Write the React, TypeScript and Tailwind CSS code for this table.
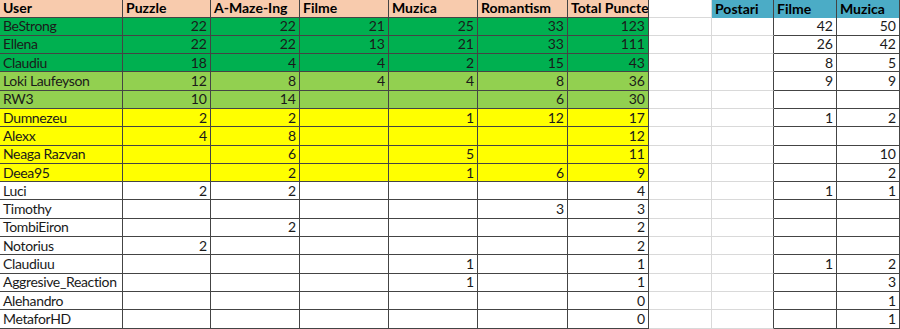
type Row = {
  user: string;
  vals: (number | null)[];
  total: number;
  filme: number | null;
  muzica: number | null;
  tone: "dark" | "light" | "yellow" | "none";
};

const ROWS: Row[] = [
  { user: "BeStrong", vals: [22, 22, 21, 25, 33], total: 123, filme: 42, muzica: 50, tone: "dark" },
  { user: "Ellena", vals: [22, 22, 13, 21, 33], total: 111, filme: 26, muzica: 42, tone: "dark" },
  { user: "Claudiu", vals: [18, 4, 4, 2, 15], total: 43, filme: 8, muzica: 5, tone: "dark" },
  { user: "Loki Laufeyson", vals: [12, 8, 4, 4, 8], total: 36, filme: 9, muzica: 9, tone: "light" },
  { user: "RW3", vals: [10, 14, null, null, 6], total: 30, filme: null, muzica: null, tone: "light" },
  { user: "Dumnezeu", vals: [2, 2, null, 1, 12], total: 17, filme: 1, muzica: 2, tone: "yellow" },
  { user: "Alexx", vals: [4, 8, null, null, null], total: 12, filme: null, muzica: null, tone: "yellow" },
  { user: "Neaga Razvan", vals: [null, 6, null, 5, null], total: 11, filme: null, muzica: 10, tone: "yellow" },
  { user: "Deea95", vals: [null, 2, null, 1, 6], total: 9, filme: null, muzica: 2, tone: "yellow" },
  { user: "Luci", vals: [2, 2, null, null, null], total: 4, filme: 1, muzica: 1, tone: "none" },
  { user: "Timothy", vals: [null, null, null, null, 3], total: 3, filme: null, muzica: null, tone: "none" },
  { user: "TombiEiron", vals: [null, 2, null, null, null], total: 2, filme: null, muzica: null, tone: "none" },
  { user: "Notorius", vals: [2, null, null, null, null], total: 2, filme: null, muzica: null, tone: "none" },
  { user: "Claudiuu", vals: [null, null, null, 1, null], total: 1, filme: 1, muzica: 2, tone: "none" },
  { user: "Aggresive_Reaction", vals: [null, null, null, 1, null], total: 1, filme: null, muzica: 3, tone: "none" },
  { user: "Alehandro", vals: [null, null, null, null, null], total: 0, filme: null, muzica: 1, tone: "none" },
  { user: "MetaforHD", vals: [null, null, null, null, null], total: 0, filme: null, muzica: 1, tone: "none" },
];

const TONE = {
  dark: "bg-[#00b050]",
  light: "bg-[#92d050]",
  yellow: "bg-[#ffff00]",
  none: "bg-white",
};

const GRID =
  "grid grid-cols-[123px_88px_89px_89px_89px_90px_81px_63px_62px_63px_63px]";

const dark = "border-r border-b border-[#444]";
const light = "border-r border-b border-[#d9d9d9]";

export default function App() {
  return (
    <div
      className="w-[900px] h-[329px] overflow-hidden bg-white text-[14px] leading-none text-[#1a1a1a]"
      style={{ fontFamily: "Lato, 'Liberation Sans', sans-serif" }}
    >
      <div className={`${GRID} h-[17.5px] font-bold text-black`}>
        {["User", "Puzzle", "A-Maze-Ing", "Filme", "Muzica", "Romantism", "Total Puncte"].map((h) => (
          <div key={h} className={`${dark} bg-[#f8cbad] flex items-center pl-[3px] whitespace-nowrap overflow-hidden`}>
            {h}
          </div>
        ))}
        <div className={`${light} bg-white`} />
        <div className="border-r border-[#444] bg-[#4bacc6] flex items-center px-[3px]">Postari</div>
        <div className="border-r border-[#444] bg-[#4bacc6] flex items-center px-[3px]">Filme</div>
        <div className="border-r border-[#444] bg-[#4bacc6] flex items-center px-[3px]">Muzica</div>
      </div>
      {ROWS.map((r) => (
        <div key={r.user} className={`${GRID} h-[18.3px]`}>
          <div className={`${dark} ${TONE[r.tone]} flex items-center pl-[3px] whitespace-nowrap tracking-[-0.35px]`}>
            {r.user}
          </div>
          {r.vals.map((v, i) => (
            <div key={i} className={`${dark} ${TONE[r.tone]} flex items-center justify-end pr-[3px]`}>
              {v ?? ""}
            </div>
          ))}
          <div className={`${dark} ${TONE[r.tone]} flex items-center justify-end pr-[3px]`}>{r.total}</div>
          <div className={light} />
          <div className="border-r border-b border-r-[#444] border-b-[#d9d9d9]" />
          <div className={`${dark} flex items-center justify-end pr-[3px]`}>{r.filme ?? ""}</div>
          <div className={`${dark} flex items-center justify-end pr-[3px]`}>{r.muzica ?? ""}</div>
        </div>
      ))}
    </div>
  );
}
